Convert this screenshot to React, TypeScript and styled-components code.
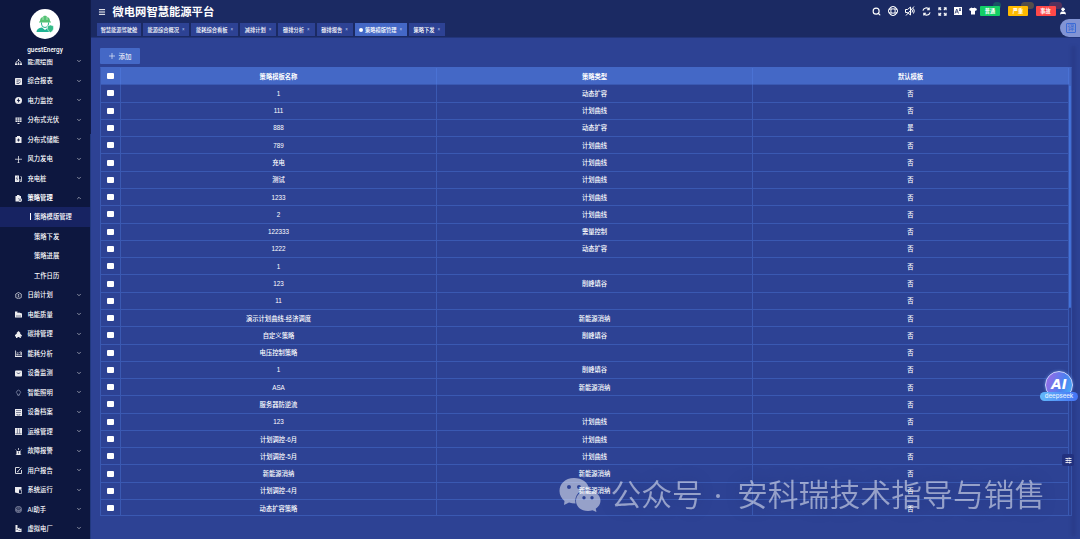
import React from 'react';
import styled, { createGlobalStyle } from 'styled-components';
import { ChevronDown, ChevronUp, Search, User, Menu, SlidersHorizontal } from 'lucide-react';

const Global = createGlobalStyle`
  * { box-sizing: border-box; }
  html, body { margin: 0; height: 539px; overflow: hidden; }
  body { background: #2d4294; color: #fff; font-family: "Liberation Sans", "Noto Sans CJK SC", sans-serif; font-size: 6.3px; }
`;
const Page = styled.div`display: flex; width: 1080px; height: 539px; position: relative; overflow: hidden;`;
const Side = styled.aside`
  width: 91px; flex: none; display: flex; flex-direction: column; padding-right: 1px;
  background: linear-gradient(#101b48 134px, #22397f 134px) right / 1px 100% no-repeat, #0d173f;
`;
const Profile = styled.div`height: 59px; flex: none; display: flex; flex-direction: column; align-items: center; padding-top: 9px;`;
const Avatar = styled.div`width: 30px; height: 30px; border-radius: 50%; background: #fff; display: grid; place-items: center;`;
const UserName = styled.div`margin-top: 6.500px; font: 500 6.4px/8px Roboto, sans-serif;`;
const MenuList = styled.nav`flex: 1; overflow: hidden;`;
const MenuInner = styled.div`margin-top: -7.5px;`;
const MenuItem = styled.div<{ $strong?: boolean }>`
  height: 19.48px; display: flex; align-items: center; padding: 0 8px 0 15px; font-weight: ${p => (p.$strong ? 700 : 500)};
  svg { flex: none; }
  span { flex: 1; margin-left: 5.5px; white-space: nowrap; }
`;
const MenuIcon = styled.svg`width: 7px; height: 7px; position: relative; top: 0.5px; opacity: .92;`;
const SubItem = styled.div<{ $active?: boolean }>`
  height: 19.48px; display: flex; align-items: center; padding-left: 30px; font-weight: 500;
  background: ${p => (p.$active ? '#172362' : 'transparent')};
  &::before { content: ''; width: 1px; height: 7px; margin-right: 3px; background: ${p => (p.$active ? '#fff' : 'transparent')}; }
`;
const Main = styled.main`flex: 1; min-width: 0; display: flex; flex-direction: column;`;
const Header = styled.header`height: 38px; flex: none; background: #1b2a63; border-bottom: 1px solid #22357b;`;
const TitleBar = styled.div`height: 23px; display: flex; align-items: center; padding-left: 7px; padding-right: 13px;`;
const Title = styled.h1`margin: 0 auto 0 6.500px; font: 700 11.3px/20px "Noto Sans CJK SC", sans-serif; position: relative; top: -1px;`;
const Tools = styled.div`display: flex; align-items: center; height: 22px; margin-top: -1px;`;
const Tool = styled.i<{ $w: number }>`width: ${p => p.$w}px; display: grid; place-items: center;`;
const Tag = styled.b<{ $bg: string; $gap: number }>`
  position: relative; width: 20px; height: 10px; margin-right: ${p => p.$gap}px; border-radius: 1px; background: ${p => p.$bg};
  text-align: center; font-size: 5.2px; line-height: 10px;
`;
const Count = styled.em<{ $bg: string; $w: number }>`
  position: absolute; left: 13px; top: -4px; width: ${p => p.$w}px; height: 7px; border-radius: 4px; background: ${p => p.$bg}; opacity: .25;
`;
const Tabs = styled.div`display: flex; gap: 2px; padding-left: 6px;`;
const Tab = styled.div<{ $w: number; $active?: boolean }>`
  width: ${p => p.$w}px; height: 13px; display: flex; align-items: center; justify-content: center; gap: 3px;
  background: ${p => (p.$active ? '#4468c6' : '#2d4294')}; font-size: 5.25px; font-weight: 500; white-space: nowrap;
`;
const Dot = styled.i`width: 4px; height: 4px; border-radius: 50%; background: #fff; margin-right: -1px;`;
const Close = styled.i`font: 400 4.5px/6px "Liberation Sans", sans-serif; color: #bcc8ee;`;
const Content = styled.section`flex: 1; padding: 10px 8px 0 9px;`;
const AddButton = styled.button`
  width: 40px; height: 16px; display: flex; align-items: center; justify-content: center; gap: 4px; padding: 0; border: 0; border-radius: 1px;
  background: #4468c6; color: #fff; font: 400 6.5px "Noto Sans CJK SC", sans-serif;
`;
const TableBox = styled.div`margin-top: 3px; width: 972px; height: 449px; border: 1px solid #3a59b2; border-top-color: #4468c6; display: flex;`;
const Grid = styled.div`width: 968px; overflow: hidden;`;
const Row = styled.div<{ $head?: boolean }>`
  display: grid; grid-template-columns: 20px 316px 316px 316px; height: 17.29px;
  background: ${p => (p.$head ? '#4468c6' : 'transparent')}; font-weight: ${p => (p.$head ? 700 : 500)};
  --line: ${p => (p.$head ? '#4a72d4' : '#3a59b2')};
`;
const Cell = styled.div`border-right: 1px solid var(--line); border-bottom: 1px solid #3a59b2; display: flex; align-items: center; justify-content: center;`;
const Box = styled.i`width: 6.500px; height: 6px; border-radius: 1px; background: #fff;`;
const Track = styled.div`flex: 1; background: linear-gradient(#4468c6 17px, transparent 17px); padding-top: 17px;`;
const Thumb = styled.div`width: 2px; height: 223px; background: #4677df; border-radius: 1px;`;
const Float = styled.div<{ $x: number; $y: number }>`position: absolute; left: ${p => p.$x}px; top: ${p => p.$y}px;`;
const Translate = styled.div`width: 24px; height: 18px; border-radius: 9px 0 0 9px; background: #8294d4; padding: 4px 6px;`;
const TranslateIcon = styled.div`
  width: 10px; height: 10px; border: 1px solid #3c6bd6; border-radius: 1px; text-align: center;
  font: 500 7px/7.500px "Noto Sans CJK SC", sans-serif; color: #3c6bd6;
`;
const AiBall = styled.div`
  width: 28px; height: 28px; margin-left: 5px; border-radius: 50%; border: 1px solid #c9d5ff;
  background: linear-gradient(110deg, #a268e4, #4c80f0 60%, #45b5f8); box-shadow: 0 0 3px rgba(120, 170, 255, .6);
  text-align: center; font: italic 700 13.5px/25px "DejaVu Sans", sans-serif;
`;
const AiLabel = styled.div`
  margin-top: -7px; position: relative; width: 38px; height: 9px; border-radius: 5px; background: linear-gradient(90deg, #62b8fa, #4472f5);
  text-align: center; font: 500 6.1px/8px Inter, sans-serif; color: #e4f0ff;
`;
const SideTool = styled.div`width: 12px; height: 12px; border-radius: 2px; background: #22317f; display: grid; place-items: center;`;
const Shade = styled.div`width: 5px; height: 490px; background: rgba(30, 45, 110, .25); filter: blur(1.5px);`;
const Watermark = styled.div`
  display: flex; align-items: center; height: 40px; white-space: nowrap; color: #fff; opacity: .5;
  font: 350 30.8px/38px "Noto Sans CJK SC", sans-serif; text-shadow: 0 0 16px rgba(20, 35, 80, .5);
`;
const Account = styled.span`margin-left: 9.5px; position: relative; top: -1px;`;
const Slogan = styled.span`letter-spacing: 0.06px; position: relative; top: -1px;`;
const MiddleDot = styled.i`width: 4px; height: 4px; border-radius: 50%; background: #fff; margin: 4px 17px 0 13px;`;

const glyph: Record<string, React.ReactNode> = {
  flow: <><path d="M7 1v5M2 13V8l5-3 5 3v5M7 8v5" fill="none" stroke="#fff" strokeWidth="1.500" /><circle cx="7" cy="2" r="1.500" /><path d="M0 11h4v3H0zM5 11h4v3H5zM10 11h4v3h-4z" /></>,
  report: <><rect width="14" height="14" rx="1.500" /><path d="M3 4h8M3 7.500h4M3 11h5l3-4" fill="none" stroke="#0d173f" strokeWidth="1.300" /></>,
  power: <><circle cx="7" cy="7" r="7" /><path d="M8 1.500L3.500 8h3L5.500 12.500 10.500 6h-3z" fill="#0d173f" /></>,
  solar: <><path d="M1 1h12v9H1zM5 12h4v2H5z" /><path d="M5 1v9M9 1v9M1 4h12M1 7h12" stroke="#0d173f" strokeWidth=".8" /></>,
  battery: <><path d="M1 2h3V0h6v2h3v12H1z" /><path d="M7 5v6M4 8h6" stroke="#0d173f" strokeWidth="1.600" /></>,
  wind: <path d="M7 0v14M0 6.500h14M5 13.500h4" stroke="#fff" strokeWidth="1.500" />,
  charger: <><path d="M0 1h8v13H0z" /><path d="M10 13h3V4l-2-2M10 13V8" stroke="#fff" fill="none" strokeWidth="1.500" /><path d="M5 3L2.500 7.500h3L4 11" stroke="#0d173f" fill="none" /></>,
  strategy: <><path d="M1 2h3V0h5v2h3v4H7v7H1z" /><circle cx="10" cy="10" r="4" /><circle cx="10" cy="10" r="1.500" fill="#0d173f" /></>,
  plan: <><path d="M7 1l5.500 3v7L7 13.500 1.500 11V4z" fill="none" stroke="#fff" strokeWidth="1.400" /><path d="M7 4v6M5 6.500l2-2 2 2M5 10h4" fill="none" stroke="#fff" /></>,
  quality: <><path d="M0 1h5v3l3-1 6 2v8H0z" /><path d="M2 10h10" stroke="#0d173f" /></>,
  carbon: <path d="M7 0l4 4-1 1 4 4-1 2h-2l1 3H9v-2H5v2H2v-3H0V8l4-3-1-1z" />,
  usage: <><path d="M0 1h1.500v11H14v2H0zM3 7h2.500v4H3zM7 8h2v3H7zM11 4h2.500v7H11z" /><path d="M3 4l4 2 6-4" fill="none" stroke="#fff" /></>,
  monitor: <><rect y="1" width="14" height="12" rx="2" /><path d="M4 5l3 3 3-3" fill="none" stroke="#0d173f" strokeWidth="1.500" /></>,
  lamp: <path d="M5 10a4 4 0 1 1 4 0v2H5zM5.500 13.500h3" fill="none" stroke="#aab1cc" strokeWidth="1.200" />,
  archive: <><path d="M0 0h14v14H0z" /><path d="M2 3h10M2 7h10M4 10v2h6v-2" stroke="#0d173f" fill="none" /></>,
  columns: <><path d="M0 0h14v14H0z" /><path d="M4.700 1v10M9.300 1v10M1 11.500h12" stroke="#0d173f" /></>,
  alarm: <><path d="M3 6h8v7H3zM1.500 13h11v1h-11zM6.300 0h1.400v4H6.300z" /><path d="M1 3l2 2M13 3l-2 2" stroke="#fff" strokeWidth="1.300" /><path d="M7 7v4" stroke="#0d173f" strokeWidth="1.300" /></>,
  edit: <path d="M9 1H1v12h12V6M5 9.500L12.500 1.500M4.500 9.500h2.500" fill="none" stroke="#fff" strokeWidth="1.800" />,
  system: <><path d="M0 0h13v5H8v8l-8-2z" /><path d="M9 6h4v7H8" fill="none" stroke="#fff" strokeWidth="1.200" /></>,
  ai: <><circle cx="7" cy="7" r="6.200" fill="none" stroke="#ced2e2" strokeWidth="1.200" /><path d="M3 6h8v3H3zM5 3.500h4M5 11h4" fill="none" stroke="#ced2e2" /></>,
  plant: <><path d="M1 0h4v7l4-2v3l4-1v7H1z" /><path d="M3 9h3M7 11h4" stroke="#0d173f" /></>,
};
type Item = [string, string];
const before: Item[] = [['能流绘图', 'flow'], ['综合报表', 'report'], ['电力监控', 'power'], ['分布式光伏', 'solar'], ['分布式储能', 'battery'], ['风力发电', 'wind'], ['充电桩', 'charger']];
const after: Item[] = [['日前计划', 'plan'], ['电能质量', 'quality'], ['碳排管理', 'carbon'], ['能耗分析', 'usage'], ['设备监测', 'monitor'], ['智能照明', 'lamp'], ['设备档案', 'archive'], ['运维管理', 'columns'], ['故障报警', 'alarm'], ['用户报告', 'edit'], ['系统运行', 'system'], ['AI助手', 'ai'], ['虚拟电厂', 'plant']];
const tabs: [string, number][] = [['智慧能源驾驶舱', 44], ['能源综合概况', 46], ['能耗综合看板', 47], ['减排计划', 36], ['碳排分析', 36.5], ['碳排报告', 36], ['策略模版管理', 52], ['策略下发', 36.5]];
const rows: [string, string, string][] = [
  ['1', '动态扩容', '否'], ['111', '计划曲线', '否'], ['888', '动态扩容', '是'], ['789', '计划曲线', '否'], ['充电', '计划曲线', '否'],
  ['测试', '计划曲线', '否'], ['1233', '计划曲线', '否'], ['2', '计划曲线', '否'], ['122333', '需量控制', '否'], ['1222', '动态扩容', '否'],
  ['1', '', '否'], ['123', '削峰填谷', '否'], ['11', '', '否'], ['演示计划曲线-经济调度', '新能源消纳', '否'], ['自定义策略', '削峰填谷', '否'],
  ['电压控制策略', '', '否'], ['1', '削峰填谷', '否'], ['ASA', '新能源消纳', '否'], ['服务器防逆流', '', '否'], ['123', '计划曲线', '否'],
  ['计划调控-6月', '计划曲线', '否'], ['计划调控-5月', '计划曲线', '否'], ['新能源消纳', '新能源消纳', '否'], ['计划调控-4月', '新能源消纳', '否'], ['动态扩容策略', '', '否'],
];

const Glyph = ({ name }: { name: string }) => <MenuIcon viewBox="0 0 14 14" fill="#fff">{glyph[name]}</MenuIcon>;
const Entry = ({ item }: { item: Item }) => (
  <MenuItem><Glyph name={item[1]} /><span>{item[0]}</span><ChevronDown size={6} /></MenuItem>
);
const Line = ({ size, children }: { size: number; children: React.ReactNode }) => (
  <svg width={size} height={size} viewBox="0 0 20 20" fill="none" stroke="#fff" strokeWidth="2">{children}</svg>
);

export default function App() {
  return (
    <Page>
      <Global />
      <Side>
        <Profile>
          <Avatar>
            <svg width="20" height="18" viewBox="0 0 20 18">
              <path d="M4 7.500v-1h1a4.800 4.800 0 0 1 3-4.800l1-1h2l1 1a4.800 4.800 0 0 1 3 4.800h1v1z" fill="#55c274" />
              <path d="M8 2v3M12 2v3" stroke="#fff" strokeWidth=".5" />
              <path d="M6.500 7.500v1.500a3.500 3.500 0 0 0 7 0v-1.500" fill="none" stroke="#26b58f" />
              <path d="M1.500 17q0-4 5.500-4.500l3 2.500 3-2.500 3 1v3.500z" fill="#1fb394" />
              <path d="M15.500 10l3 1v3q-.5 2.500-3 3.500-2.500-1-3-3.500v-3z" fill="#35bb88" stroke="#fff" strokeWidth=".5" />
            </svg>
          </Avatar>
          <UserName>guestEnergy</UserName>
        </Profile>
        <MenuList>
          <MenuInner>
            {before.map(i => <Entry key={i[0]} item={i} />)}
            <MenuItem $strong><Glyph name="strategy" /><span>策略管理</span><ChevronUp size={6} /></MenuItem>
            <SubItem $active>策略模版管理</SubItem>
            <SubItem>策略下发</SubItem>
            <SubItem>策略进展</SubItem>
            <SubItem>工作日历</SubItem>
            {after.map(i => <Entry key={i[0]} item={i} />)}
          </MenuInner>
        </MenuList>
      </Side>
      <Main>
        <Header>
          <TitleBar>
            <Menu size={8} strokeWidth={3} />
            <Title>微电网智慧能源平台</Title>
            <Tools>
              <Tool $w={16}><Search size={9} strokeWidth={3} /></Tool>
              <Tool $w={17}><Line size={10}><circle cx="10" cy="10" r="9" /><circle cx="10" cy="10" r="4.500" /><path d="M6 2v4L2 7M14 2v4l4 1M6 18v-4l-4-1M14 18v-4l4-1" /></Line></Tool>
              <Tool $w={17}><Line size={10}><path d="M1 7h4l6-5v16l-6-5H1zM2 19L18 1M14 7q2 3 0 6M17 5q3 5 0 10" /></Line></Tool>
              <Tool $w={17}><Line size={9}><path strokeWidth="2.500" d="M2 8a8 8 0 0 1 14-3M18 12a8 8 0 0 1-14 3M16 1v5h-5M4 19v-5h5" /></Line></Tool>
              <Tool $w={15}><Line size={9}><path strokeWidth="2.500" d="M2 7V2h5M13 2h5v5M18 13v5h-5M7 18H2v-5M2 2l5 5M18 2l-5 5M18 18l-5-5M2 18l5-5" /></Line></Tool>
              <Tool $w={15}><svg width="8" height="8" viewBox="0 0 16 16"><path d="M0 0h16v16H0z" fill="#fff" /><path d="M2 13L5.500 4 9 13M3.500 10h4M10 4h4M10 7h4M12 2v5" fill="none" stroke="#1b2a63" strokeWidth="1.500" /></svg></Tool>
              <Tool $w={15}><svg width="8" height="8" viewBox="0 0 16 16"><path d="M5 1q3 2 6 0l5 3-2 4-2-1v8H4V7L2 8 0 4z" fill="#fff" /></svg></Tool>
              <Tag $bg="#13ce66" $gap={8}>普通<Count $bg="#13ce66" $w={8} /></Tag>
              <Tag $bg="#ffba00" $gap={7.5}>严重<Count $bg="#ffba00" $w={13} /></Tag>
              <Tag $bg="#ff4949" $gap={3.5}>事故<Count $bg="#ff4949" $w={13} /></Tag>
              <User size={8} fill="#fff" strokeWidth={3} />
            </Tools>
          </TitleBar>
          <Tabs>
            {tabs.map(([t, w], i) => (
              <Tab key={t} $w={w} $active={i === 6}>{i === 6 && <Dot />}{t}{i > 0 && <Close>×</Close>}</Tab>
            ))}
          </Tabs>
        </Header>
        <Content>
          <AddButton><Line size={6}><path d="M10 0v20M0 10h20" /></Line>添加</AddButton>
          <TableBox>
            <Grid>
              <Row $head><Cell><Box /></Cell><Cell>策略模板名称</Cell><Cell>策略类型</Cell><Cell>默认模板</Cell></Row>
              {rows.map((r, i) => <Row key={i}><Cell><Box /></Cell><Cell>{r[0]}</Cell><Cell>{r[1]}</Cell><Cell>{r[2]}</Cell></Row>)}
            </Grid>
            <Track><Thumb /></Track>
          </TableBox>
        </Content>
      </Main>
      <Float $x={1071} $y={46}><Shade /></Float>
      <Float $x={1060} $y={19}><Translate><TranslateIcon>译</TranslateIcon></Translate></Float>
      <Float $x={1040} $y={371}><AiBall>AI</AiBall><AiLabel>deepseek</AiLabel></Float>
      <Float $x={1062} $y={454}><SideTool><SlidersHorizontal size={7} strokeWidth={3} /></SideTool></Float>
      <Float $x={559} $y={474}>
        <Watermark>
          <svg width="42" height="36" viewBox="0 0 42 36">
            <path fill="#fff" fillRule="evenodd" d="M15 2C6 2 .5 8 .5 15c0 4 2 7.500 5 10l-.5 4 5-2.500q3 1 6.500 1C15 19 21 13 30 13 29 6 23 2 15 2zM10 9a2 2 0 1 1 0 4 2 2 0 0 1 0-4zm10 0a2 2 0 1 1 0 4 2 2 0 0 1 0-4z" />
            <path fill="#fff" fillRule="evenodd" d="M29 14.500c-7 0-12 4.500-12 10.300S22 35 29 35q2.500 0 4.500-.7l4 1.700-.8-3.200c3-2 4.800-4.800 4.800-8 0-5.800-5.500-10.300-12.500-10.300zM25 20a1.700 1.700 0 1 1 0 3.400 1.700 1.700 0 0 1 0-3.400zm8 0a1.700 1.700 0 1 1 0 3.400 1.700 1.700 0 0 1 0-3.400z" />
          </svg>
          <Account>公众号</Account><MiddleDot /><Slogan>安科瑞技术指导与销售</Slogan>
        </Watermark>
      </Float>
    </Page>
  );
}
